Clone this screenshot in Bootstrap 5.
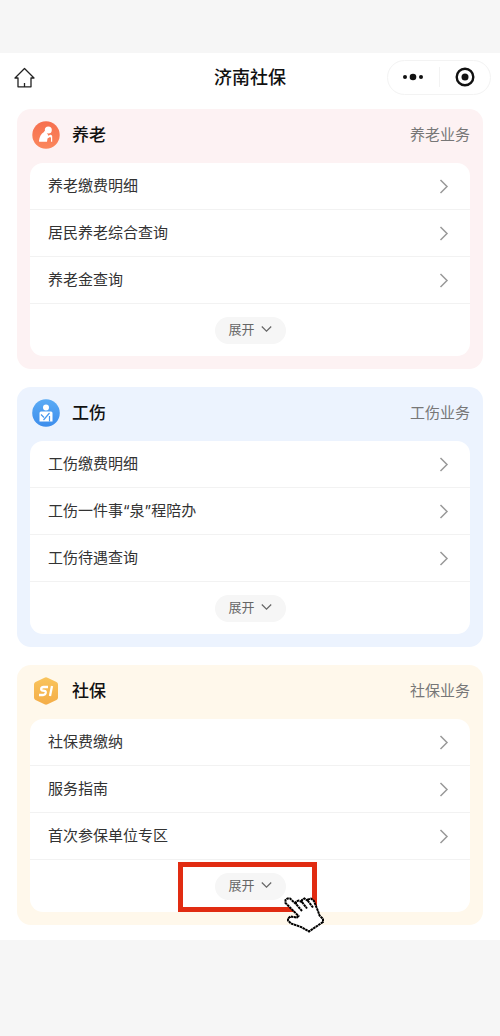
<!DOCTYPE html>
<html lang="zh-CN">
<head>
<meta charset="utf-8">
<meta name="viewport" content="width=device-width, initial-scale=1">
<title>济南社保</title>
<link href="https://cdn.jsdelivr.net/npm/bootstrap@5.3.0/dist/css/bootstrap.min.css" rel="stylesheet">
<style>
body{background:#f6f6f6;font-family:Inter,"Noto Sans CJK SC",sans-serif;font-size:15px;line-height:24px;color:#333}
.screen{margin:53px 0 96px;padding-bottom:15px}
.topbar{height:48px;padding:0 9px;margin-bottom:8px}
.topbar>*{flex:1 1 0}
.page-title{font-size:18px;line-height:24px;padding-top:2px;color:#111}
.icon-btn{background:none;border:0;padding:0;line-height:0}
.capsule{width:104px;height:35px;border:1px solid #f3f3f3}
.capsule .icon-btn{flex:1;height:20px}
.capsule .icon-btn+.icon-btn{border-left:1px solid #f3f3f3}
.sections{padding:0 17px;gap:18px}
.panel{border-radius:14px;padding:0 13px 13px}
.panel-pink{background:#fdf2f3}
.panel-blue{background:#ecf3fe}
.panel-cream{background:#fff8eb}
.panel-head{height:54px;padding:0 0 2px 2px}
.panel-title{font-size:17px;line-height:24px;font-weight:500;color:#111}
.panel-more{color:#777}
.items{border-radius:13px}
.item{height:47px;padding:0 20px 0 18px;border-bottom:1px solid #f2f2f2;color:#333}
.item-foot{height:52px}
.expand{width:71px;height:27px;border:0;background:#f6f6f6;color:#666;font-size:13px;line-height:20px;padding:0 0 2px;gap:6px}
.marker{inset:-11px -31px -12px -37px;border:5px solid #e12c12;pointer-events:none}
.pointer{left:69px;top:24px;pointer-events:none}
</style>
</head>
<body>
<div class="screen bg-white">
<header class="topbar d-flex align-items-center">
<div><button class="icon-btn ms-1" aria-label="首页"><svg width="22" height="22" viewBox="0 0 22 22" fill="none" stroke="#222" stroke-width="1.3" stroke-linejoin="round"><path d="M11.500 1.500 2 11h3v8.800h13V11h3zM11.500 16v3.800"/></svg></button></div>
<h1 class="page-title text-center mb-0">济南社保</h1>
<div class="d-flex justify-content-end"><div class="capsule rounded-pill d-flex align-items-center">
<button class="icon-btn" aria-label="更多"><svg width="22" height="8" viewBox="0 0 22 8" fill="#111"><circle cx="3" cy="4" r="2"/><circle cx="11" cy="4" r="3.3"/><circle cx="19" cy="4" r="2"/></svg></button>
<button class="icon-btn" aria-label="关闭"><svg width="20" height="20" viewBox="0 0 20 20"><circle cx="10" cy="10" r="8.3" fill="none" stroke="#111" stroke-width="2.4"/><circle cx="10" cy="10" r="3.5" fill="#111"/></svg></button>
</div></div>
</header>
<main class="sections d-flex flex-column">
<section class="panel panel-pink">
<div class="panel-head d-flex align-items-center">
<svg width="28" height="28" viewBox="0 0 28 28"><defs><linearGradient id="g1" x2="0" y2="1"><stop stop-color="#f6704f"/><stop offset="1" stop-color="#fb875c"/></linearGradient></defs><circle cx="14" cy="14" r="13.7" fill="url(#g1)"/><g fill="#fff"><circle cx="16.3" cy="9" r="3.5"/><path d="M12 11c-3 1.500-4.500 5-5 8.700-.1.800.2 1.100.9 1.100H15l.5-3.300 2.500-1.500 1 .8v4h1.200v-5.300c-.1-1.300-1.200-2.200-2.400-1.600l-1.500.8c-.6-2-2-3.700-4.300-4.700z"/></g></svg>
<h2 class="panel-title mb-0 ms-2 ps-1">养老</h2><a href="#" class="panel-more text-decoration-none ms-auto">养老业务</a></div>
<div class="items bg-white">
<a href="#" class="item d-flex align-items-center justify-content-between text-decoration-none">养老缴费明细<svg width="12" height="16" viewBox="0 0 12 16" fill="none" stroke="#999" stroke-width="1.5"><path d="m2.500 2 6.500 6.500L2.500 15"/></svg></a>
<a href="#" class="item d-flex align-items-center justify-content-between text-decoration-none">居民养老综合查询<svg width="12" height="16" viewBox="0 0 12 16" fill="none" stroke="#999" stroke-width="1.5"><path d="m2.500 2 6.500 6.500L2.500 15"/></svg></a>
<a href="#" class="item d-flex align-items-center justify-content-between text-decoration-none">养老金查询<svg width="12" height="16" viewBox="0 0 12 16" fill="none" stroke="#999" stroke-width="1.5"><path d="m2.500 2 6.500 6.500L2.500 15"/></svg></a>
<div class="item-foot d-flex align-items-center justify-content-center"><button class="expand rounded-pill d-flex align-items-center justify-content-center">展开<svg width="11" height="8" viewBox="0 0 11 8" fill="none" stroke="#666" stroke-width="1.2"><path d="m.8 1.500 4.700 4.700 4.700-4.700"/></svg></button></div>
</div>
</section>
<section class="panel panel-blue">
<div class="panel-head d-flex align-items-center">
<svg width="28" height="28" viewBox="0 0 28 28"><defs><linearGradient id="g2" x2="0" y2="1"><stop stop-color="#5aabf5"/><stop offset="1" stop-color="#3d8dec"/></linearGradient></defs><circle cx="14" cy="14" r="13.8" fill="url(#g2)"/><circle cx="14" cy="8.500" r="3" fill="#fff"/><path fill="#fff" d="M9 12.500h10q1.500 0 1.500 1.500v8.500h-13V14q0-1.500 1.500-1.500z"/><path d="m9 15.500 3 3M17.500 14l-6 7M17.500 22.500V17" fill="none" stroke="#4799ef" stroke-width="1.200"/></svg>
<h2 class="panel-title mb-0 ms-2 ps-1">工伤</h2><a href="#" class="panel-more text-decoration-none ms-auto">工伤业务</a></div>
<div class="items bg-white">
<a href="#" class="item d-flex align-items-center justify-content-between text-decoration-none">工伤缴费明细<svg width="12" height="16" viewBox="0 0 12 16" fill="none" stroke="#999" stroke-width="1.5"><path d="m2.500 2 6.500 6.500L2.500 15"/></svg></a>
<a href="#" class="item d-flex align-items-center justify-content-between text-decoration-none">工伤一件事“泉”程陪办<svg width="12" height="16" viewBox="0 0 12 16" fill="none" stroke="#999" stroke-width="1.5"><path d="m2.500 2 6.500 6.500L2.500 15"/></svg></a>
<a href="#" class="item d-flex align-items-center justify-content-between text-decoration-none">工伤待遇查询<svg width="12" height="16" viewBox="0 0 12 16" fill="none" stroke="#999" stroke-width="1.5"><path d="m2.500 2 6.500 6.500L2.500 15"/></svg></a>
<div class="item-foot d-flex align-items-center justify-content-center"><button class="expand rounded-pill d-flex align-items-center justify-content-center">展开<svg width="11" height="8" viewBox="0 0 11 8" fill="none" stroke="#666" stroke-width="1.2"><path d="m.8 1.500 4.700 4.700 4.700-4.700"/></svg></button></div>
</div>
</section>
<section class="panel panel-cream">
<div class="panel-head d-flex align-items-center">
<svg width="28" height="28" viewBox="0 0 28 28"><defs><linearGradient id="g3" x2="0" y2="1"><stop stop-color="#f9c45c"/><stop offset="1" stop-color="#f4ad48"/></linearGradient></defs><path fill="url(#g3)" d="M12.500.7q1.500-.8 3 0l9 4.300q1.500.8 1.500 2.500v13q0 1.700-1.500 2.500l-9 4.300q-1.500.8-3 0l-9-4.300Q2 22.200 2 20.500v-13Q2 5.800 3.500 5z"/><path d="M16 10h-4.500q-2 0-2.300 1.800-.2 1.700 1.600 1.900l1.600.2q1.600.2 1.300 2-.4 2.100-2.500 2.100H7M20 9l-2 10" fill="none" stroke="#fff" stroke-width="2.300"/></svg>
<h2 class="panel-title mb-0 ms-2 ps-1">社保</h2><a href="#" class="panel-more text-decoration-none ms-auto">社保业务</a></div>
<div class="items bg-white">
<a href="#" class="item d-flex align-items-center justify-content-between text-decoration-none">社保费缴纳<svg width="12" height="16" viewBox="0 0 12 16" fill="none" stroke="#999" stroke-width="1.5"><path d="m2.500 2 6.500 6.500L2.500 15"/></svg></a>
<a href="#" class="item d-flex align-items-center justify-content-between text-decoration-none">服务指南<svg width="12" height="16" viewBox="0 0 12 16" fill="none" stroke="#999" stroke-width="1.5"><path d="m2.500 2 6.500 6.500L2.500 15"/></svg></a>
<a href="#" class="item d-flex align-items-center justify-content-between text-decoration-none">首次参保单位专区<svg width="12" height="16" viewBox="0 0 12 16" fill="none" stroke="#999" stroke-width="1.5"><path d="m2.500 2 6.500 6.500L2.500 15"/></svg></a>
<div class="item-foot d-flex align-items-center justify-content-center"><div class="position-relative"><button class="expand rounded-pill d-flex align-items-center justify-content-center">展开<svg width="11" height="8" viewBox="0 0 11 8" fill="none" stroke="#666" stroke-width="1.2"><path d="m.8 1.500 4.700 4.700 4.700-4.700"/></svg></button>
<span class="marker position-absolute"></span>
<svg class="pointer position-absolute" width="42" height="38" viewBox="0 0 42 38"><path d="M1.500 6V3L3.500 1.500H6L12 7V5L14.500 3.500 18 5V3L20.500 1.500 24 4V2.500L27 1.500 30 4l1.500 4 2.500 6 1.500 4.500L39 22v3L25 34.500 17 30 7 26.500 4 23.500V21.500L6.500 19.500 13 20.500 14.500 19z" fill="#fff"/><path d="M12 7 6 1.500H3.500L1.500 3v3l13 13-1.500 1.500-6.500-1L4 21.500v2l3 3L17 30l8 4.500L39 25v-3l-3.500-3.500L34 14l-2.500-6L30 4l-3-2.500-3 1V4l5 6.500M24 4l-3.500-2.500L18 3v2l5 6.500M18 5l-3.500-1.500L12 5v2l6 7" fill="none" stroke="#000" stroke-width="2" stroke-dasharray="2.600 .5"/></svg></div></div>
</div>
</section>
</main>
</div>
<script src="https://cdn.jsdelivr.net/npm/bootstrap@5.3.0/dist/js/bootstrap.bundle.min.js"></script>
</body>
</html>
